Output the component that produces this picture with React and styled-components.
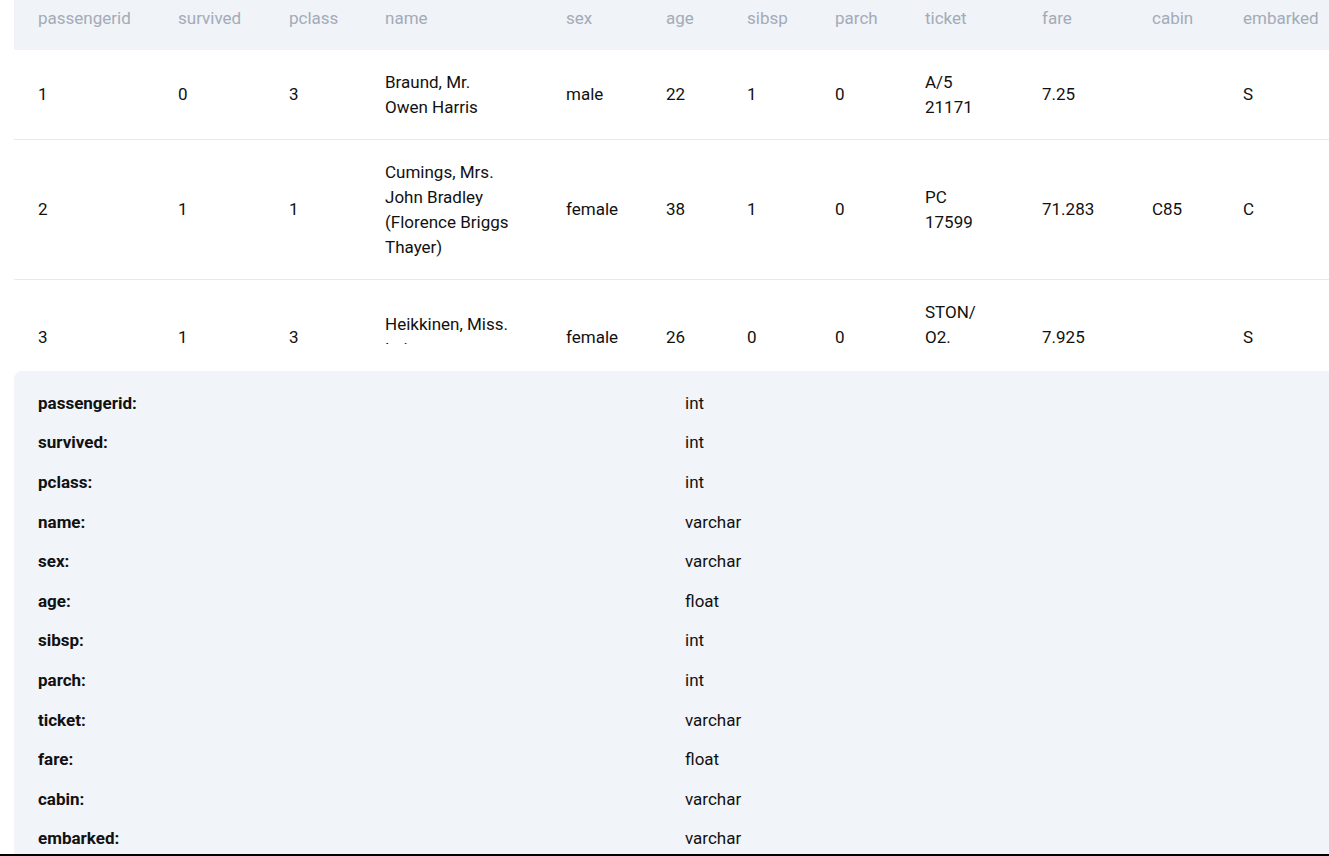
import React from 'react'
import styled, { createGlobalStyle } from 'styled-components'

const GlobalStyle = createGlobalStyle`
  html, body {
    margin: 0;
    padding: 0;
    overflow: hidden;
    background: #fff;
  }
  body {
    font-family: Roboto, "Liberation Sans", Arial, sans-serif;
    color: #111;
  }
`

const Page = styled.div`
  box-sizing: border-box;
  height: 856px;
  overflow: hidden;
  border-bottom: 2px solid #000;
`
const Content = styled.div`
  width: 1342px;
  margin-left: 14px;
`
const TableViewport = styled.div`
  height: 344px;
  overflow: hidden;
`
const Table = styled.table`
  border-collapse: collapse;
  table-layout: fixed;
  width: 1342px;
  font-size: 17px;
  line-height: 25px;
`
const HeadCell = styled.th`
  background: #f0f3f7;
  color: #a3abb8;
  font-weight: 400;
  text-align: left;
  padding: 6px 0 19px 24px;
  white-space: nowrap;
`
const Row = styled.tr`
  border-bottom: 1px solid #e6eaf0;
`
const Cell = styled.td`
  padding: 19.5px 0 19.5px 24px;
  vertical-align: middle;
  color: #111;
`
const CellText = styled.div`
  max-width: ${p => (p.$wrap ? `${p.$wrap}px` : 'none')};
`
const SchemaPanel = styled.div`
  margin-top: 27px;
  background: #f1f4f8;
  border-radius: 8px 0 0 0;
  padding: 12px 24px;
`
const SchemaRow = styled.div`
  display: grid;
  grid-template-columns: 1fr 1fr;
  height: 39.6px;
  align-items: center;
  font-size: 17px;
`
const FieldName = styled.span`
  font-weight: 700;
  color: #111;
`
const FieldType = styled.span`
  color: #111;
`

const columns = [
  { key: 'passengerid', width: 140 },
  { key: 'survived', width: 111 },
  { key: 'pclass', width: 96 },
  { key: 'name', width: 181, wrap: 126 },
  { key: 'sex', width: 100 },
  { key: 'age', width: 81 },
  { key: 'sibsp', width: 88 },
  { key: 'parch', width: 90 },
  { key: 'ticket', width: 117, wrap: 60 },
  { key: 'fare', width: 110 },
  { key: 'cabin', width: 91 },
  { key: 'embarked', width: 137 },
]

const rows = [
  { passengerid: 1, survived: 0, pclass: 3, name: 'Braund, Mr. Owen Harris', sex: 'male', age: 22, sibsp: 1, parch: 0, ticket: 'A/5 21171', fare: '7.25', cabin: '', embarked: 'S' },
  { passengerid: 2, survived: 1, pclass: 1, name: 'Cumings, Mrs. John Bradley (Florence Briggs Thayer)', sex: 'female', age: 38, sibsp: 1, parch: 0, ticket: 'PC 17599', fare: '71.283', cabin: 'C85', embarked: 'C' },
  { passengerid: 3, survived: 1, pclass: 3, name: 'Heikkinen, Miss. Laina', sex: 'female', age: 26, sibsp: 0, parch: 0, ticket: 'STON/\u200bO2. 3101282', fare: '7.925', cabin: '', embarked: 'S' },
]

const schema = [
  ['passengerid', 'int'],
  ['survived', 'int'],
  ['pclass', 'int'],
  ['name', 'varchar'],
  ['sex', 'varchar'],
  ['age', 'float'],
  ['sibsp', 'int'],
  ['parch', 'int'],
  ['ticket', 'varchar'],
  ['fare', 'float'],
  ['cabin', 'varchar'],
  ['embarked', 'varchar'],
]

const App = () => (
  <Page>
    <GlobalStyle />
    <Content>
      <TableViewport>
        <Table>
          <colgroup>
            {columns.map(c => <col key={c.key} style={{ width: c.width }} />)}
          </colgroup>
          <thead>
            <tr>
              {columns.map(c => <HeadCell key={c.key}>{c.key}</HeadCell>)}
            </tr>
          </thead>
          <tbody>
            {rows.map(r => (
              <Row key={r.passengerid}>
                {columns.map(c => (
                  <Cell key={c.key}>
                    <CellText $wrap={c.wrap}>{r[c.key]}</CellText>
                  </Cell>
                ))}
              </Row>
            ))}
          </tbody>
        </Table>
      </TableViewport>
      <SchemaPanel>
        {schema.map(([field, type]) => (
          <SchemaRow key={field}>
            <FieldName>{field}:</FieldName>
            <FieldType>{type}</FieldType>
          </SchemaRow>
        ))}
      </SchemaPanel>
    </Content>
  </Page>
)

export default App
